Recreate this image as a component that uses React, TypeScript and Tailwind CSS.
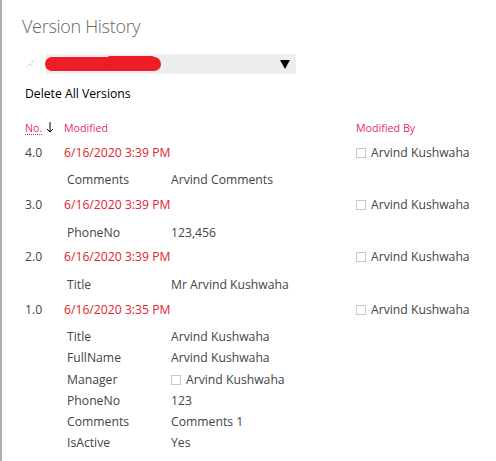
import React from "react";

type Change = { label: string; value: string; person?: boolean };
type Version = { no: string; modified: string; by: string; changes: Change[] };

const versions: Version[] = [
  { no: "4.0", modified: "6/16/2020 3:39 PM", by: "Arvind Kushwaha", changes: [{ label: "Comments", value: "Arvind Comments" }] },
  { no: "3.0", modified: "6/16/2020 3:39 PM", by: "Arvind Kushwaha", changes: [{ label: "PhoneNo", value: "123,456" }] },
  { no: "2.0", modified: "6/16/2020 3:39 PM", by: "Arvind Kushwaha", changes: [{ label: "Title", value: "Mr Arvind Kushwaha" }] },
  {
    no: "1.0",
    modified: "6/16/2020 3:35 PM",
    by: "Arvind Kushwaha",
    changes: [
      { label: "Title", value: "Arvind Kushwaha" },
      { label: "FullName", value: "Arvind Kushwaha" },
      { label: "Manager", value: "Arvind Kushwaha", person: true },
      { label: "PhoneNo", value: "123" },
      { label: "Comments", value: "Comments 1" },
      { label: "IsActive", value: "Yes" },
    ],
  },
];

// tiny empty presence box shown before a user name
function PersonBox() {
  return <span className="inline-block w-[10px] h-[10px] border border-[#c8c8c8] bg-white mr-[5px] shrink-0" />;
}

function VersionBlock({ v }: { v: Version }) {
  return (
    <div className="mb-[2px]">
      <div className="flex items-center h-[24px] text-[12.2px]">
        <span className="w-[39px] text-[#444]">{v.no}</span>
        <span className="w-[292px] text-[#e2222e]">{v.modified}</span>
        <span className="flex items-center text-[#444]">
          <PersonBox />
          {v.by}
        </span>
      </div>
      <div className="mt-[5px]">
        {v.changes.map((c, i) => (
          <div key={i} className="flex items-center h-[21.25px] text-[12.2px] text-[#444]">
            <span className="ml-[42px] w-[104px]">{c.label}</span>
            <span className="flex items-center">
              {c.person && <PersonBox />}
              {c.value}
            </span>
          </div>
        ))}
      </div>
    </div>
  );
}

export default function App() {
  return (
    <div
      className="w-[496px] h-[461px] bg-white border-l-2 border-[#b0b0b0] pl-[23px] overflow-hidden"
      style={{ fontFamily: '"Open Sans", "Noto Sans", sans-serif' }}
    >
      <h1 className="mt-[12px] h-[28px] leading-[28px] text-[18px] tracking-[-0.3px] font-light text-[#666] -ml-[3px]">
        Version History
      </h1>

      <div className="mt-[14px] flex items-center h-[20px]">
        <svg width="9" height="8" viewBox="0 0 9 8" className="ml-[1px] mr-[11px]">
          <path d="M1 7 L4 4 L6 6 M5 2 L8 1" stroke="#d0d0d0" strokeWidth="1" fill="none" />
        </svg>
        <div className="relative w-[250px] h-[20px] bg-[#eeeeee] flex items-center justify-end pr-[6px]">
          <div className="absolute left-[-1px] top-[3px] w-[116px] h-[14px] bg-[#ee1c25] rounded-[7px]" />
          <div className="absolute left-[60px] top-[2px] w-[50px] h-[9px] bg-[#ee1c25] rounded-[5px]" />
          <svg width="10" height="9" viewBox="0 0 10 9">
            <polygon points="0,0 10,0 5,9" fill="#000" />
          </svg>
        </div>
      </div>

      <div className="mt-[10px] h-[20px] flex items-center text-[12.2px] text-black">Delete All Versions</div>

      <div className="mt-[14px] flex items-center h-[20px] text-[10.7px] text-[#e6305a]">
        <span className="w-[39px] flex items-center">
          <span className="underline decoration-dotted decoration-[#e6305a] underline-offset-2">No.</span>
          <svg width="8" height="11" viewBox="0 0 8 11" className="ml-[4px]">
            <path d="M4 0 V10 M1 7 L4 10 L7 7" stroke="#000" strokeWidth="1" fill="none" />
          </svg>
        </span>
        <span className="w-[292px]">Modified</span>
        <span>Modified By</span>
      </div>

      <div className="mt-[3px]">
        {versions.map((v) => (
          <VersionBlock key={v.no} v={v} />
        ))}
      </div>
    </div>
  );
}
